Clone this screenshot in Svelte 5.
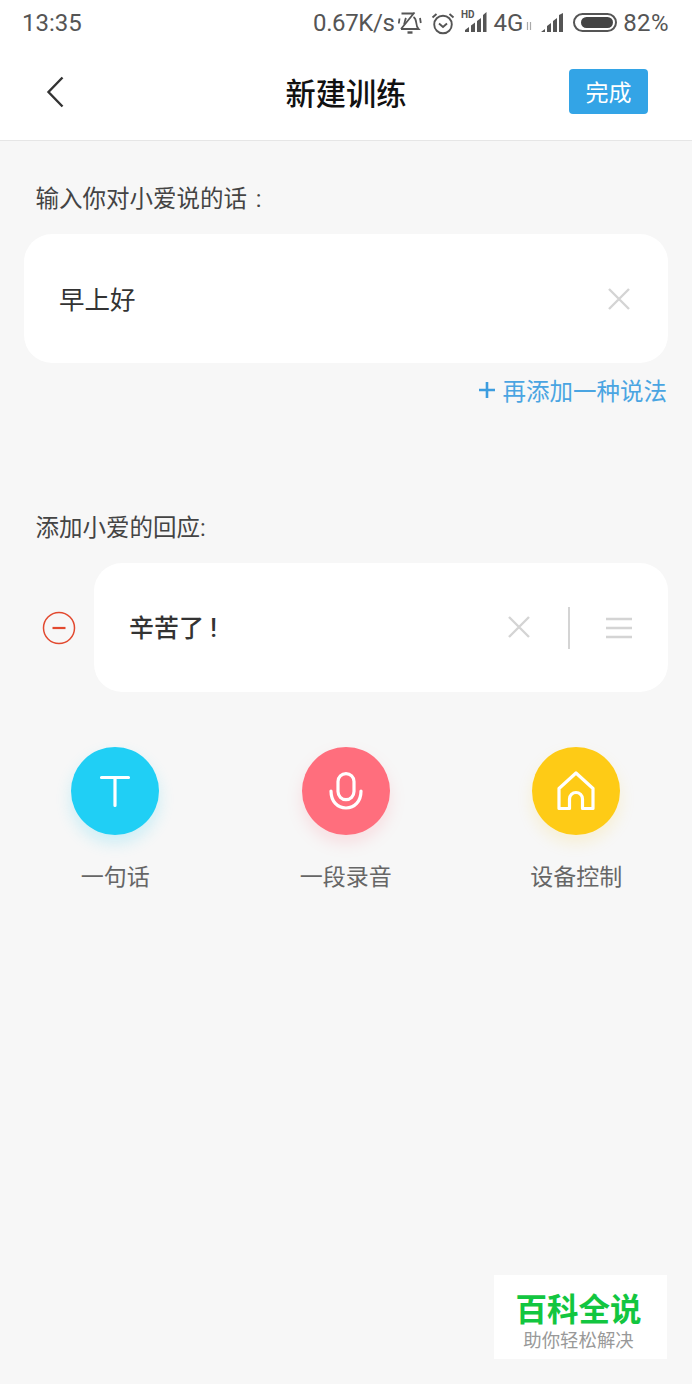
<script>
  const actions = [
    { label: '一句话', kind: 'text' },
    { label: '一段录音', kind: 'mic' },
    { label: '设备控制', kind: 'home' }
  ];
</script>

<div class="page">
  <header>
    <div class="status">
      <span class="time">13:35</span>
      <div class="indicators">
        <span class="speed">0.67K/s</span>
        <svg class="bell" width="24" height="22" viewBox="0 0 24 22" fill="none" stroke="#555" stroke-width="1.800">
          <path d="M3.500 1.500h12M16.500.5L3 17" />
          <path d="M3 17h17.500c-1.500-1.500-2-3.500-2.300-6.500-.3-2.500-1-4.500-2.700-5.500M6 12.500c.8-2 1-4.500 2-6.500" />
          <path d="M9.500 20.500h5" stroke-width="2.400" />
          <path d="M1.500 6.500l-.7 5M22 6l.8 5" />
        </svg>
        <svg class="alarm" width="24" height="24" viewBox="0 0 24 24" fill="none" stroke="#555" stroke-width="1.900">
          <circle cx="12" cy="13.500" r="8.800" />
          <path d="M8 12.500l4 3.500 4-3.500M1.500 6.500l4-3.500M22.500 6.500l-4-3.500" />
        </svg>
        <svg class="signal-hd" width="26" height="24" viewBox="0 0 26 24">
          <text x="0" y="8" class="hd">HD</text>
          <path d="M4 20l4-3v5H4zM10 15.500l4-3V22h-4zM16 11l4-3v14h-4zM22 5l3.500-3v20H22z" fill="#555" />
        </svg>
        <span class="net">4G</span>
        <svg width="6" height="8" viewBox="0 0 6 8" class="arrows">
          <path d="M1.500 0v8M4.500 0v8" stroke="#aaa" stroke-width="1.200" />
        </svg>
        <svg width="23" height="20" viewBox="0 0 23 20" class="signal">
          <path d="M0 19l4-3v3zM6 19v-6l4-3v9zM12 19V8l4-3v14zM18 19V2l4-2v19z" fill="#555" />
        </svg>
        <span class="battery"><span class="fill"></span></span>
        <span class="level">82%</span>
      </div>
    </div>
    <nav>
      <svg class="back" width="18" height="32" viewBox="0 0 18 32" fill="none" stroke="#333" stroke-width="2.400">
        <path d="M16.500 1.500L2.500 16l14 14.500" />
      </svg>
      <h1>新建训练</h1>
      <button class="done">完成</button>
    </nav>
  </header>

  <main>
    <p class="label first">输入你对小爱说的话 :</p>
    <div class="card">
      <span class="value">早上好</span>
      <svg class="x" width="26" height="26" viewBox="0 0 26 26" stroke="#d4d4d4" stroke-width="2.400">
        <path d="M3 3l20 20M23 3L3 23" />
      </svg>
    </div>
    <div class="add">
      <svg width="18" height="18" viewBox="0 0 18 18" stroke="#3c9ddf" stroke-width="2.600">
        <path d="M9 1v16M1 9h16" />
      </svg>
      <span>再添加一种说法</span>
    </div>

    <p class="label second">添加小爱的回应:</p>
    <div class="reply-row">
      <svg class="minus" width="34" height="34" viewBox="0 0 34 34" fill="none" stroke="#e2492f">
        <circle cx="17" cy="17" r="15.500" stroke-width="1.500" />
        <path d="M10.500 17h13" stroke-width="2.200" />
      </svg>
      <div class="card reply">
        <span class="value strong">辛苦了 !</span>
        <svg class="x" width="26" height="26" viewBox="0 0 26 26" stroke="#d4d4d4" stroke-width="2.400">
          <path d="M3 3l20 20M23 3L3 23" />
        </svg>
        <span class="divider"></span>
        <svg class="menu" width="26" height="22" viewBox="0 0 26 22" stroke="#d4d4d4" stroke-width="2.400">
          <path d="M0 2h26M0 11h26M0 20h26" />
        </svg>
      </div>
    </div>

    <div class="actions">
      {#each actions as action}
        <div class="action">
          <span class="circle {action.kind}">
            {#if action.kind === 'text'}
              <svg width="36" height="36" viewBox="0 0 36 36" fill="none" stroke="#fff" stroke-width="3.200" stroke-linecap="round">
                <path d="M4.500 4.500h27M18 4.500v28" />
              </svg>
            {:else if action.kind === 'mic'}
              <svg width="34" height="38" viewBox="0 0 34 38" fill="none" stroke="#fff" stroke-width="3.200" stroke-linecap="round">
                <rect x="9" y="1.600" width="16" height="26" rx="8" />
                <path d="M2 19c0 10.500 6.500 17 15 17s15-6.500 15-17" />
              </svg>
            {:else}
              <svg width="38" height="40" viewBox="0 0 38 40" fill="none" stroke="#fff" stroke-width="3.200" stroke-linejoin="round">
                <path d="M2 37.500V17.500L19 2l17 15.500v20H25.500V28a6.500 6.500 0 0 0-13 0v9.500z" />
              </svg>
            {/if}
          </span>
          <span class="caption">{action.label}</span>
        </div>
      {/each}
    </div>
  </main>

  <div class="watermark">
    <strong>百科全说</strong>
    <span>助你轻松解决</span>
  </div>
</div>

<style>
  :global(body) {
    margin: 0;
    background: #f7f7f7;
  }

  .page {
    position: relative;
    width: 692px;
    height: 1384px;
    overflow: hidden;
    background: #f7f7f7;
    font-family: "Roboto", "Noto Sans CJK SC", sans-serif;
    color: #333;
  }

  header {
    height: 140px;
    background: #fff;
    border-bottom: 1px solid #e6e6e6;
  }

  .status {
    height: 45px;
    display: flex;
    align-items: center;
    justify-content: space-between;
    padding: 0 23px 0 22px;
    color: #555;
    font-size: 24px;
  }

  .indicators {
    display: flex;
    align-items: center;
  }

  .speed { letter-spacing: -0.4px; }
  .bell { margin: 0 9px 0 4px; }
  .signal-hd { margin: -2px 6px 0 6px; }
  .net { margin-right: 1px; }
  .arrows { margin: 6px 9px 0 2px; }
  .battery {
    margin: 0 6px 0 9px;
    width: 44px;
    height: 19px;
    box-sizing: border-box;
    border: 2px solid #555;
    border-radius: 10px;
    padding: 2px 2px 2px 6px;
    display: flex;
  }
  .fill {
    flex: 1;
    background: #444;
    border-radius: 6px;
  }
  .level { letter-spacing: 0.4px; }
  .hd {
    font-size: 10px;
    font-weight: 700;
    fill: #555;
  }

  nav {
    height: 93px;
    display: grid;
    grid-template-columns: 1fr auto 1fr;
    align-items: center;
    padding: 0 46px;
  }

  .done {
    justify-self: end;
    margin-right: -2px;
  }

  h1 {
    margin: 0;
    font-size: 30.25px;
    font-weight: 500;
    color: #111;
  }

  .done {
    width: 79px;
    height: 45px;
    border: 0;
    border-radius: 4px;
    background: #33a4e6;
    color: #fff;
    font: inherit;
    font-size: 23px;
    padding-bottom: 2px;
  }

  .label {
    margin: 0;
    padding-left: 35.5px;
    font-size: 23.5px;
    line-height: 32px;
    color: #444;
  }

  .first { padding-top: 42px; word-spacing: 3px; }
  .second { padding-top: 105px; }

  .card {
    height: 129px;
    box-sizing: border-box;
    background: #fff;
    border-radius: 28px;
    display: flex;
    align-items: center;
  }

  main > .card {
    margin: 19px 24px 0;
    padding: 0 36px;
    justify-content: space-between;
  }

  .value {
    font-size: 25.5px;
    color: #333;
    margin-bottom: 3px;
    margin-left: -1px;
  }

  .strong { font-weight: 500; font-size: 25px; }

  .add {
    display: flex;
    align-items: center;
    justify-content: flex-end;
    gap: 7px;
    margin-top: 10px;
    padding-right: 25px;
    height: 34px;
    font-size: 23.5px;
    color: #4aa5e2;
  }

  .reply-row {
    display: flex;
    align-items: center;
    margin-top: 19px;
    padding: 0 24px 0 42px;
  }

  .reply {
    flex: 1;
    margin-left: 18px;
    padding: 0 36px;
  }

  .reply .value { flex: 1; }

  .reply .x { margin-bottom: 1px; }

  .divider {
    width: 2px;
    height: 42px;
    background: #d4d4d4;
    margin: 0 36px 0 36px;
  }

  .actions {
    display: grid;
    grid-template-columns: repeat(3, 1fr);
    margin-top: 55px;
    padding-right: 0.5px;
  }

  .action {
    display: flex;
    flex-direction: column;
    align-items: center;
    gap: 27px;
  }

  .circle {
    width: 88px;
    height: 88px;
    border-radius: 50%;
    display: flex;
    align-items: center;
    justify-content: center;
  }

  .circle.text {
    background: #20cff5;
    box-shadow: 0 8px 16px rgba(32, 207, 245, 0.2);
  }
  .circle.mic {
    background: #ff6e7d;
    box-shadow: 0 8px 16px rgba(255, 110, 125, 0.18);
  }
  .circle.home {
    background: #fecb16;
    box-shadow: 0 8px 16px rgba(254, 203, 22, 0.15);
  }

  .caption {
    font-size: 23px;
    line-height: 32px;
    color: #666;
  }

  .watermark {
    position: absolute;
    left: 494px;
    top: 1275px;
    width: 173px;
    height: 84px;
    background: #fff;
    display: flex;
    flex-direction: column;
    align-items: center;
    padding: 18px 4px 0 0;
    box-sizing: border-box;
  }

  .watermark strong {
    font-size: 31.5px;
    line-height: 36px;
    font-weight: 700;
    color: #12c640;
  }

  .watermark span {
    font-size: 18.4px;
    line-height: 24px;
    color: #999;
  }
</style>
